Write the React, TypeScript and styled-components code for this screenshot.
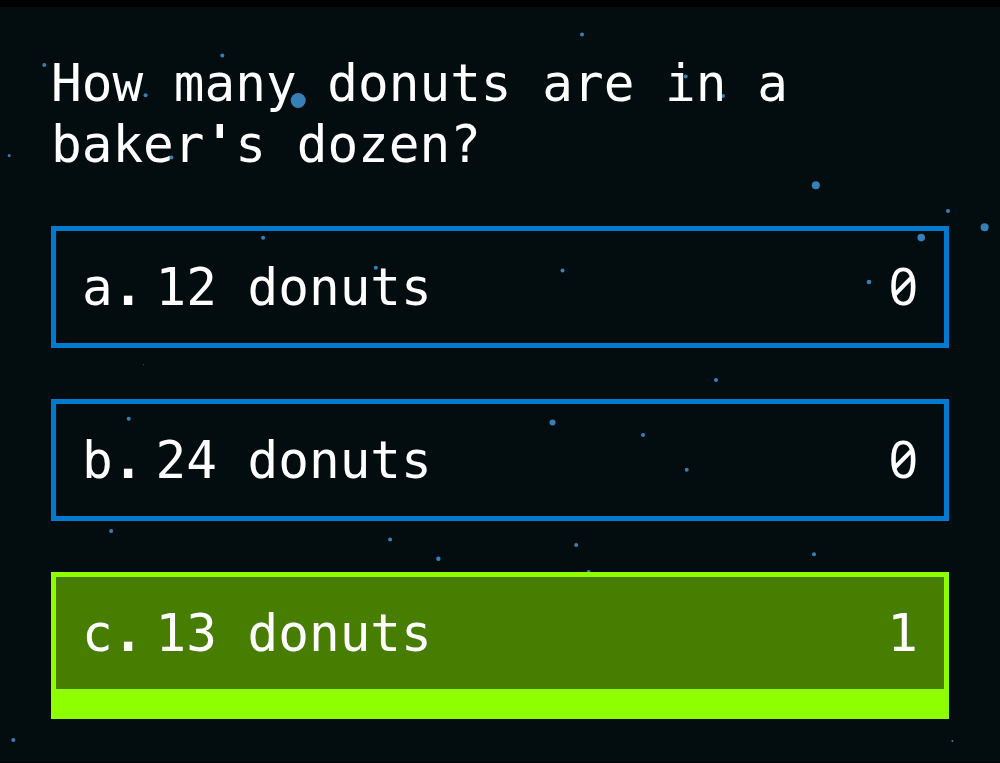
import React from "react";
import styled, { createGlobalStyle } from "styled-components";

const GlobalStyle = createGlobalStyle`
  * { box-sizing: border-box; }
  body {
    margin: 0;
    background: #030c0f;
    color: #fff;
    font-family: "DejaVu Sans Mono", monospace;
    font-size: 51px;
    line-height: 60px;
  }
`;

const Page = styled.main`
  position: relative;
  isolation: isolate;
  min-height: 100vh;
  padding: 46px 51px 42px;
  border-top: 7px solid #000;
  border-bottom: 1px solid #000;
`;

const Particles = styled.svg`
  position: absolute;
  z-index: -1;
  top: -7px;
  left: 0;
  pointer-events: none;
  fill: #3680b8;
`;

const Question = styled.h1`
  margin: 0 0 51px;
  font-size: 51px;
  font-weight: 400;
  line-height: 61px;
`;

const Word = styled.span`
  white-space: nowrap;
`;

const Answers = styled.div`
  display: flex;
  flex-direction: column;
  gap: 51px;
`;

const Answer = styled.button<{ $correct?: boolean }>`
  display: flex;
  align-items: baseline;
  width: 100%;
  padding: 27px 26px 25px;
  border: 5px solid ${(p) => (p.$correct ? "#8eff00" : "#007acf")};
  border-bottom-width: ${(p) => (p.$correct ? 30 : 5)}px;
  background: ${(p) => (p.$correct ? "#477d00" : "transparent")};
  color: inherit;
  font: inherit;
  text-align: left;
`;

const Letter = styled.span`
  margin-right: 12px;
`;

const Mark = styled.span`
  font-weight: 700;
`;

const Label = styled.span`
  flex: 1;
`;

const Votes = styled.span<{ $zero: boolean }>`
  font-family: ${(p) => (p.$zero ? '"Noto Sans", ' : "")}"DejaVu Sans Mono", monospace;
  font-feature-settings: "zero" 1;
  line-height: 51px;
`;

const dots = [
  [44.3, 65, 2], [222.3, 55.5, 2], [145.6, 95.3, 2], [298.2, 100.5, 7.5], [9.2, 155.5, 1.5],
  [171.4, 157.5, 2], [582, 34.6, 2], [685.7, 76.6, 2], [723, 96, 2], [815.8, 185.3, 4],
  [948, 211, 2], [984.6, 227.3, 4], [921.2, 237.6, 3.8], [263.1, 237.8, 2], [375.8, 267.8, 2],
  [562.5, 270.5, 2], [869, 282, 2.3], [716, 380, 2], [143.4, 364.8, 0.5], [128.7, 418.8, 2],
  [552.5, 422.6, 3], [643, 435.1, 2], [686.7, 469.7, 2], [111.1, 531, 2], [390.1, 539.5, 2],
  [438.4, 558.7, 2.2], [576.2, 545.1, 2], [588.6, 572, 2], [814, 554.2, 2], [13.3, 740, 2],
  [952.4, 741, 1],
];

const answers = [
  { letter: "a", label: "12 donuts", votes: 0, correct: false },
  { letter: "b", label: "24 donuts", votes: 0, correct: false },
  { letter: "c", label: "13 donuts", votes: 1, correct: true },
];

export default function App() {
  return (
    <>
      <GlobalStyle />
      <Page>
        <Particles width="1000" height="763" aria-hidden="true">
          {dots.map(([x, y, r]) => (
            <circle key={`${x}-${y}`} cx={x} cy={y} r={r} />
          ))}
        </Particles>
        <Question>
          How many donuts are in a{" "}
          <Word>
            baker<Mark>'</Mark>s
          </Word>{" "}
          dozen?
        </Question>
        <Answers>
          {answers.map((a) => (
            <Answer key={a.letter} type="button" $correct={a.correct}>
              <Letter>
                {a.letter}
                <Mark>.</Mark>
              </Letter>
              <Label>{a.label}</Label>
              <Votes $zero={a.votes === 0}>{a.votes}</Votes>
            </Answer>
          ))}
        </Answers>
      </Page>
    </>
  );
}
